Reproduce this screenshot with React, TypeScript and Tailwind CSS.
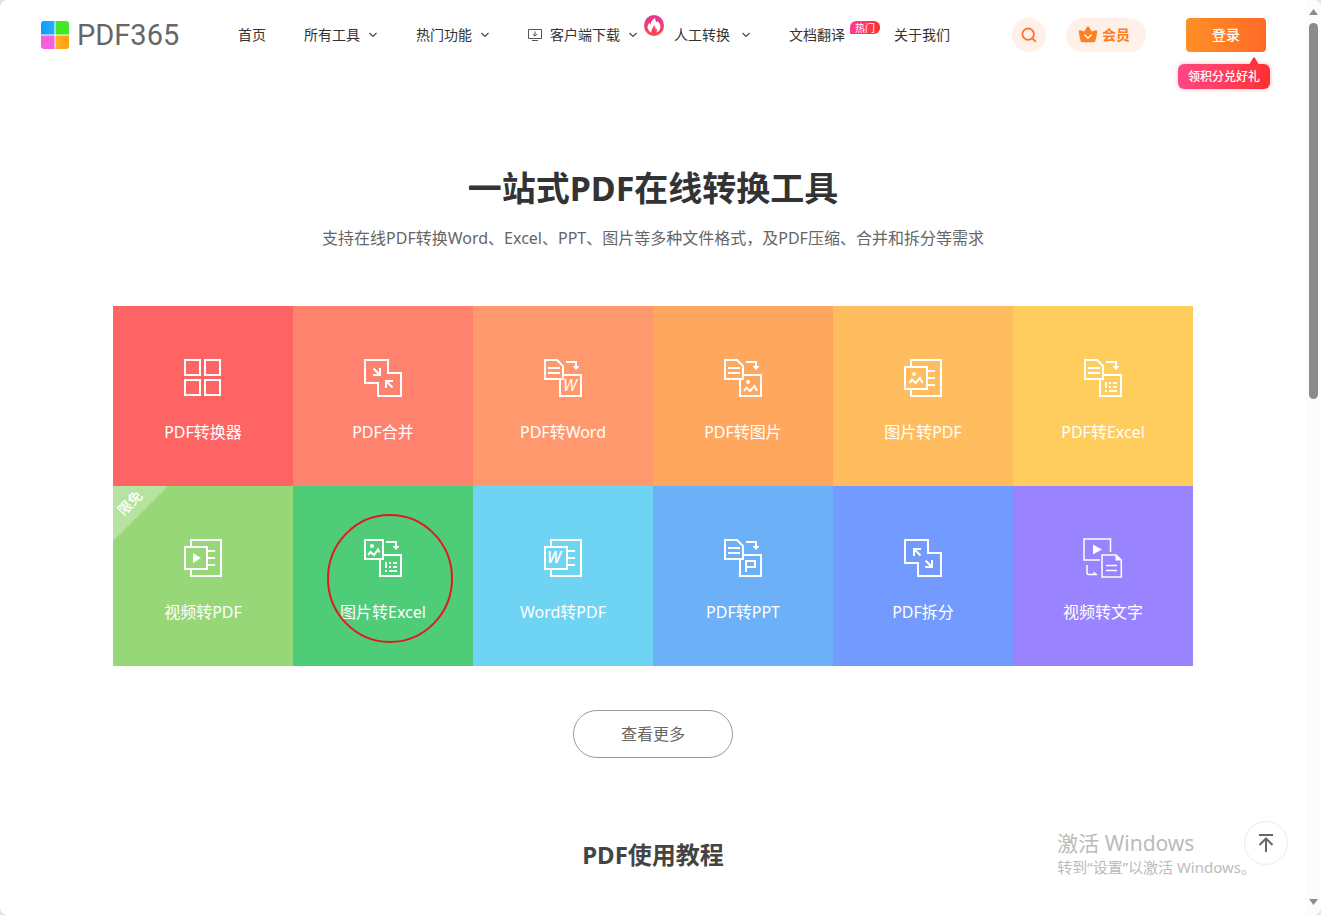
import type { ReactNode } from "react";

const Chevron = () => (
  <svg width="10" height="6" viewBox="0 0 10 6" fill="none" stroke="#444" strokeWidth="1.1" aria-hidden="true">
    <path d="M1.5 1L5 4.5L8.5 1" />
  </svg>
);

const Monitor = () => (
  <svg width="14" height="12" viewBox="0 0 14 12" fill="none" stroke="#555" aria-hidden="true">
    <path d="M.5 .5H13.5V9.5H.5Z M4 11.5H10 M7 2.5V7 M4.8 5L7 7.2L9.2 5" />
  </svg>
);

const Flame = () => (
  <svg className="absolute -top-[10px] -right-[26px]" width="20" height="21" viewBox="0 0 20 21" aria-hidden="true">
    <defs>
      <linearGradient id="flame" x1="0" y1="0" x2="0" y2="1">
        <stop offset="0" stopColor="#e0349c" />
        <stop offset="1" stopColor="#fb4a4a" />
      </linearGradient>
    </defs>
    <ellipse cx="10" cy="10.5" rx="10" ry="10.5" fill="url(#flame)" />
    <path
      d="M7.5 17.5C4.7 16.3 3.4 14.3 3.6 11.8C3.7 10.3 4.4 9 5.4 7.8C5.6 8.8 5.9 9.4 6.5 9.7C6.9 6.8 8.3 4.4 11.2 3C11 5 12 6.2 12.9 7.5C13.3 7.2 13.5 6.6 13.5 6C15.3 7.6 16.5 9.5 16.4 12C16.3 14.7 14.8 16.6 12.3 17.5C13.1 16.2 13.2 15 12.6 13.7C12.3 14.2 12 14.5 11.5 14.6C11.7 13 11.1 11.4 9.9 10.3C9.7 12.3 8.6 13 8 14.2C7.4 15.3 7.2 16.3 7.5 17.5Z"
      fill="#fff"
    />
  </svg>
);

const docArrow = (
  <>
    <path d="M2 2H14L20 8V21H2Z M5 10H17 M5 15H17 M20 17H38V38H17V21 M23 4H33V8" />
    <path d="M29.5 8H36.5L33 12Z" fill="#fff" stroke="none" />
  </>
);

const pageStack = <path d="M8 8V2H38V38H8V32 M2 9H24V31H2Z M25 13H32 M25 20H32 M25 27H32" />;

const sheet = (
  <path
    d="M22 24H24V30H22Z M26 24H28V26H26Z M30 24H34V26H30Z M26 28H28V30H26Z M30 28H34V30H30Z M22 32H24V34H22Z M26 32H34V34H26Z"
    fill="#fff"
    stroke="none"
  />
);

const joined = <path d="M2 2H25V15H38V38H15V25H2Z" />;

type Tool = { label: string; color: string; icon: ReactNode; free?: boolean; circled?: boolean };

const tools: Tool[] = [
  { label: "PDF转换器", color: "bg-[#ff6464]", icon: <path d="M2 2H17V17H2Z M22 2H37V17H22Z M2 22H17V37H2Z M22 22H37V37H22Z" /> },
  {
    label: "PDF合并",
    color: "bg-[#ff826e]",
    icon: <>{joined}<path d="M17 10V17H10 M10.5 10.5L17 17 M30 23H23V30 M23 23L29.5 29.5" /></>,
  },
  {
    label: "PDF转Word",
    color: "bg-[#ff986c]",
    icon: <>{docArrow}<text x="20" y="33" fontSize="16" fontStyle="italic" fontFamily="Open Sans" fill="#fff" stroke="none">W</text></>,
  },
  {
    label: "PDF转图片",
    color: "bg-[#ffa75f]",
    icon: <>{docArrow}<circle cx="25" cy="24" r="2" fill="#fff" stroke="none" /><path d="M21 33L23.5 29.5L27 33L31.5 28L34 33" /></>,
  },
  {
    label: "图片转PDF",
    color: "bg-[#ffbd5f]",
    icon: <>{pageStack}<circle cx="11" cy="16" r="2" fill="#fff" stroke="none" /><path d="M6.5 25L9 21.5L12.5 25L17 20L19.5 25" /></>,
  },
  { label: "PDF转Excel", color: "bg-[#ffcc5e]", icon: <>{docArrow}{sheet}</> },
  {
    label: "视频转PDF",
    color: "bg-[#97d777]",
    icon: <>{pageStack}<path d="M10 15L18 20L10 25Z" fill="#fff" stroke="none" /></>,
    free: true,
  },
  {
    label: "图片转Excel",
    color: "bg-[#4fcc77]",
    icon: (
      <>
        <path d="M2 2H20V21H2Z M20 17H38V38H17V21 M23 4H33V8" />
        <path d="M29.5 8H36.5L33 12Z" fill="#fff" stroke="none" />
        <circle cx="9" cy="8" r="2" fill="#fff" stroke="none" />
        <path d="M5 17L7.5 14L11 17L15 11.5L16.5 14.5" />
        {sheet}
      </>
    ),
    circled: true,
  },
  {
    label: "Word转PDF",
    color: "bg-[#6fd4f4]",
    icon: <>{pageStack}<text x="4" y="25" fontSize="16" fontWeight="600" fontStyle="italic" fontFamily="Open Sans" fill="#fff" stroke="none">W</text></>,
  },
  { label: "PDF转PPT", color: "bg-[#6cb0f7]", icon: <>{docArrow}<path d="M23 34V23H32V29H23" /></> },
  {
    label: "PDF拆分",
    color: "bg-[#729aff]",
    icon: <>{joined}<path d="M18 11H11V18 M11 11L17.5 17.5 M29 22V29H22 M22.5 22.5L29 29" /></>,
  },
  {
    label: "视频转文字",
    color: "bg-[#9983ff]",
    icon: (
      <>
        <path strokeWidth="1.5" d="M27.5 14V1H1V22H17 M4 27V35Q4 36.5 5.5 36.5H14 M19 17H33L38.3 22V39H19Z M23 27.5H34 M23 32.5H34" />
        <path d="M10 6.5L19 11.5L10 16.5Z M32.5 17L38.5 22.5H32.5Z M10.5 33.5L14.5 37H10.5Z" fill="#fff" stroke="none" />
      </>
    ),
  },
];

const navLink = "relative flex items-center text-[14px] leading-5 text-[#333] whitespace-nowrap";

function Header() {
  return (
    <header className="flex h-[70px] shrink-0 items-center pr-10 pl-[41px]">
      <a href="#" className="flex items-center gap-2">
        <svg width="28" height="28" viewBox="0 0 28 28" aria-hidden="true">
          <defs>
            <linearGradient id="blue"><stop stopColor="#0f9bff" /><stop offset="1" stopColor="#27adff" /></linearGradient>
            <linearGradient id="orange"><stop stopColor="#ffb02c" /><stop offset="1" stopColor="#ffa00c" /></linearGradient>
          </defs>
          <path d="M3 0H13.5V13.5H0V3Q0 0 3 0Z" fill="url(#blue)" />
          <path d="M14.5 0H25Q28 0 28 3V13.5H14.5Z" fill="#43e825" />
          <path d="M0 14.5H13.5V28H3Q0 28 0 25Z" fill="#f75fdf" />
          <path d="M14.5 14.5H28V25Q28 28 25 28H14.5Z" fill="url(#orange)" />
        </svg>
        <span className="w-[103px] font-[Roboto] text-[29px] leading-8 font-normal text-[#666]">PDF365</span>
      </a>
      <nav className="ml-[58px] flex items-center">
        <a href="#" className={`${navLink} mr-[38px]`}>首页</a>
        <a href="#" className={`${navLink} mr-[38px] gap-2`}>所有工具<Chevron /></a>
        <a href="#" className={`${navLink} mr-[38px] gap-2`}>热门功能<Chevron /></a>
        <a href="#" className={`${navLink} mr-9 gap-2`}><Monitor />客户端下载<Chevron /><Flame /></a>
        <a href="#" className={`${navLink} mr-[38px] gap-[11px]`}>人工转换<Chevron /></a>
        <a href="#" className={`${navLink} mr-[49px]`}>
          文档翻译
          <span className="absolute -top-1 left-[61px] flex h-[13px] w-[30px] items-center justify-center rounded-t-md rounded-br-md bg-linear-to-r from-[#ff3f8c] to-[#ff2a2a] text-[10px] text-white">热门</span>
        </a>
        <a href="#" className={navLink}>关于我们</a>
      </nav>
      <div className="ml-auto flex items-center">
        <button type="button" aria-label="搜索" className="flex size-[34px] items-center justify-center rounded-full bg-[#fff1e8]">
          <svg width="16" height="16" viewBox="0 0 16 16" fill="none" stroke="#ff7429" strokeWidth="1.8" strokeLinecap="round">
            <circle cx="7.2" cy="7.2" r="5.7" />
            <path d="M11.3 11.3L14.3 14.3" />
          </svg>
        </button>
        <a href="#" className="ml-5 flex h-[34px] w-20 items-center justify-center gap-1 rounded-full bg-[#fff1e8] pr-1 pb-px text-[14px] font-bold text-[#ff7a1c]">
          <svg width="20" height="17" viewBox="0 0 20 17" aria-hidden="true">
            <path d="M10 .5Q11 .5 11.6 1.8L13.7 5.6L17.8 4.2Q19.6 4 19.3 5.8L17.6 14.6Q17.3 16.3 15.6 16.3H4.4Q2.7 16.3 2.4 14.6L.7 5.8Q.4 4 2.2 4.2L6.3 5.6L8.4 1.8Q9 .5 10 .5Z" fill="#ff7f22" />
            <path d="M6.8 9L10 12L13.2 9" fill="none" stroke="#fff" strokeWidth="1.6" strokeLinecap="round" />
          </svg>
          会员
        </a>
        <div className="relative ml-10">
          <button type="button" className="h-[34px] w-20 rounded bg-linear-to-r from-[#ff8f26] to-[#ff6a26] pb-px text-[14px] font-medium text-white">登录</button>
          <a href="#" className="absolute top-[46px] -right-1 flex h-[25px] w-[92px] items-center justify-center rounded-md bg-linear-to-r from-[#ff4784] to-[#ff2f2f] text-[12px] font-medium whitespace-nowrap text-white shadow-[0_0_4px_rgba(255,60,90,0.4)]">
            领积分兑好礼
            <svg className="absolute -top-[7px] right-[11px]" width="10" height="8" viewBox="0 0 10 8" aria-hidden="true">
              <path d="M0 8L4 1Q5 -.6 6 1L10 8Z" fill="#ff3338" />
            </svg>
          </a>
        </div>
      </div>
    </header>
  );
}

function ToolTile({ tool }: { tool: Tool }) {
  return (
    <a href="#" className={`relative flex h-[180px] flex-col items-center pt-[52px] text-white ${tool.color}`}>
      <svg width="40" height="40" viewBox="0 0 40 40" fill="none" stroke="#fff" strokeWidth="2" aria-hidden="true">
        {tool.icon}
      </svg>
      <span className="mt-[22px] text-[16px] leading-6">{tool.label}</span>
      {tool.free && (
        <span className="absolute top-0 left-0 size-[55px] bg-white/30 [clip-path:polygon(0_0,100%_0,0_100%)]">
          <span className="absolute top-[7px] left-[3px] -rotate-45 text-[14px] leading-5 font-medium">限免</span>
        </span>
      )}
      {tool.circled && (
        <svg className="absolute top-7 left-[34px]" width="127" height="130" viewBox="0 0 127 130" aria-hidden="true">
          <ellipse cx="63" cy="64.5" rx="62" ry="63.5" fill="none" stroke="#e3191f" strokeWidth="2" />
        </svg>
      )}
    </a>
  );
}

function ScrollTrack() {
  return (
    <div className="flex w-[15px] shrink-0 flex-col items-center bg-[#fcfcfc] pt-[9px] pb-[10px]" aria-hidden="true">
      <svg width="9" height="6" viewBox="0 0 9 6"><path d="M4.5 0L9 6H0Z" fill="#8b8b8b" /></svg>
      <div className="mt-2 h-[42%] w-[9px] rounded-full bg-[#8b8b8b]" />
      <svg className="mt-auto" width="9" height="6" viewBox="0 0 9 6"><path d="M0 0H9L4.5 6Z" fill="#8b8b8b" /></svg>
    </div>
  );
}

export default function App() {
  return (
    <div className="h-screen bg-[#e4e4e4]">
      <div className="flex h-full overflow-hidden rounded-lg bg-white font-['Noto_Sans','Noto_Sans_CJK_SC',sans-serif]">
        <div className="relative flex min-w-0 flex-1 flex-col">
          <Header />
          <main className="flex flex-col items-center px-10">
            <h1 className="mt-[94px] text-[34px] leading-[48px] font-bold text-[#333]">一站式PDF在线转换工具</h1>
            <p className="mt-[14px] text-[16px] leading-6 text-[#666]">
              支持在线PDF转换Word、Excel、PPT、图片等多种文件格式，及PDF压缩、合并和拆分等需求
            </p>
            <section className="mt-14 grid w-full max-w-[1080px] grid-cols-6">
              {tools.map((tool) => (
                <ToolTile key={tool.label} tool={tool} />
              ))}
            </section>
            <button type="button" className="mt-11 h-12 w-40 rounded-full border border-[#999] text-[16px] text-[#666]">查看更多</button>
            <h2 className="mt-[81px] text-[24px] leading-8 font-bold text-[#444]">PDF使用教程</h2>
          </main>
          <div className="pointer-events-none absolute right-[50px] bottom-9 text-[#bbb]">
            <p className="text-[21px] leading-6">激活 Windows</p>
            <p className="text-[15px] leading-6 whitespace-nowrap">转到“设置”以激活 Windows。</p>
          </div>
          <button type="button" aria-label="返回顶部" className="absolute right-[18px] bottom-[50px] flex size-11 items-center justify-center rounded-full border border-[#ececec] bg-white">
            <svg width="16" height="20" viewBox="0 0 16 20" fill="none" stroke="#666" strokeWidth="2">
              <path d="M1 2H15 M8 19V6 M1.5 12L8 5.5L14.5 12" />
            </svg>
          </button>
        </div>
        <ScrollTrack />
      </div>
    </div>
  );
}
